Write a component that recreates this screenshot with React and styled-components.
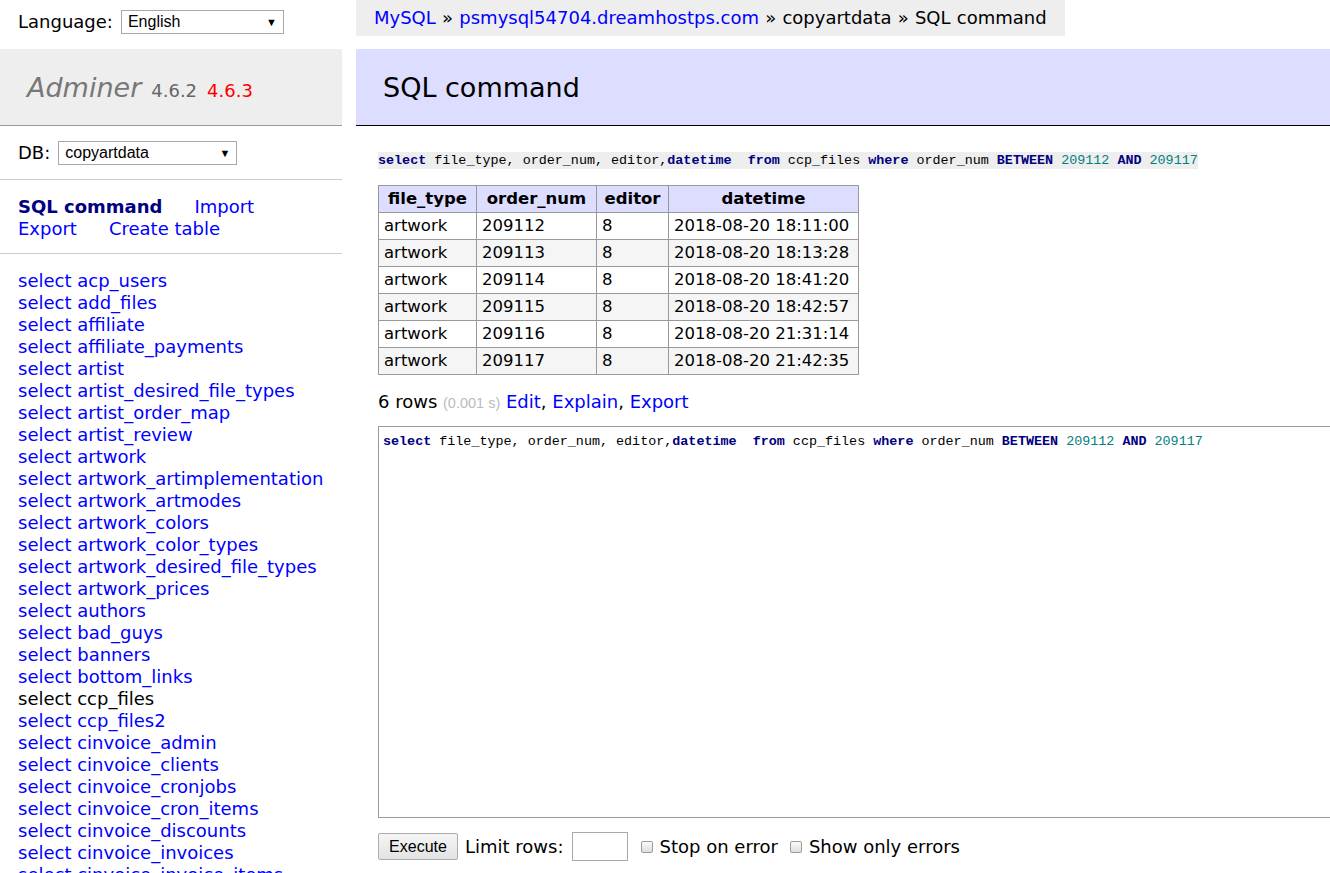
import React from "react";
import styled, { createGlobalStyle } from "styled-components";

const Global = createGlobalStyle`
  html, body { margin: 0; padding: 0; background: #fff; overflow: hidden; }
  body {
    font-family: "DejaVu Sans", Verdana, sans-serif;
    font-size: 18px;
    line-height: 22px;
    color: #000;
  }
  a { color: #00f; text-decoration: none; }
`;

const Page = styled.div`
  display: flex;
  align-items: flex-start;
  width: 1330px;
  height: 873px;
  overflow: hidden;
`;

const Sidebar = styled.aside`
  width: 342px;
  flex: none;
`;

const FieldRow = styled.div`
  box-sizing: border-box;
  height: ${(p) => p.$h}px;
  display: flex;
  align-items: center;
  gap: ${(p) => p.$gap}px;
  padding-left: 18px;
  padding-bottom: ${(p) => p.$pb || 0}px;
`;

const SelectWrap = styled.div`
  position: relative;
  width: ${(p) => p.$w}px;
  height: 24px;
  box-sizing: border-box;
  border: 1px solid #a9a9a9;
  background: #fff;
  font-family: "Liberation Sans", Arial, sans-serif;
  font-size: 16px;
  line-height: 22px;
  padding-left: 6px;
  color: #000;
`;

const Arrow = styled.span`
  position: absolute;
  right: 6px;
  top: 0;
  font-size: 11px;
  line-height: 22px;
  color: #000;
`;

const Brand = styled.h1`
  margin: 0;
  height: 76px;
  line-height: 78px;
  background: #eee;
  border-bottom: 1px solid #999;
  padding-left: 27px;
  font-size: 27px;
  font-weight: normal;
  color: #777;
`;

const BrandName = styled.span`
  font-style: italic;
`;

const Version = styled.span`
  font-size: 18px;
  margin-left: 10px;
  color: ${(p) => p.$c};
`;

const Rule = styled.hr`
  margin: 0;
  border: 0;
  border-top: 1px solid #ccc;
  height: 0;
`;

const MenuLinks = styled.div`
  display: flex;
  flex-wrap: wrap;
  column-gap: 32px;
  padding: 16px 18px 13px;
`;

const MenuLink = styled.a`
  font-weight: ${(p) => (p.$active ? "bold" : "normal")};
  color: ${(p) => (p.$active ? "#000080" : "#00f")};
`;

const TableList = styled.div`
  padding: 16px 18px;
`;

const TableLink = styled.a`
  display: block;
  white-space: nowrap;
  color: ${(p) => (p.$active ? "#000" : "#00f")};
`;

const Content = styled.main`
  flex: 1;
  min-width: 0;
  margin-left: 14px;
`;

const Breadcrumb = styled.nav`
  display: inline-block;
  background: #eee;
  padding: 7px 18px 7px;
  word-spacing: 0.5px;
  white-space: nowrap;
`;

const Sep = styled.span`
  color: #000;
`;

const Title = styled.h2`
  margin: 13px 0 0;
  height: 76px;
  line-height: 78px;
  background: #ddf;
  border-bottom: 1px solid #000;
  padding-left: 27px;
  font-size: 27px;
  font-weight: normal;
`;

const Body = styled.div`
  padding-left: 22px;
`;

const CodeLine = styled.p`
  margin: 21px 0 0;
  line-height: 22px;
`;

const Code = styled.code`
  font-family: "Liberation Mono", "DejaVu Sans Mono", monospace;
  font-size: 13.4px;
  background: ${(p) => (p.$plain ? "transparent" : "#eee")};
  white-space: pre;
  padding: 1px 0;
`;

const Kw = styled.span`
  color: #000080;
  font-weight: bold;
`;

const Num = styled.span`
  color: #008080;
`;

const Grid = styled.table`
  margin-top: 13px;
  border-collapse: collapse;
  table-layout: fixed;
  width: 481px;
  font-size: 16.5px;
`;

const Th = styled.th`
  width: ${(p) => p.$w}px;
  background: #ddf;
  border: 1px solid #999;
  padding: 2px 5px;
  font-weight: bold;
  text-align: center;
  white-space: nowrap;
`;

const Tr = styled.tr`
  background: ${(p) => (p.$odd ? "#f5f5f5" : "#fff")};
`;

const Td = styled.td`
  border: 1px solid #999;
  padding: 2px 5px;
  white-space: nowrap;
`;

const Summary = styled.p`
  margin: 16px 0 0;
`;

const Time = styled.span`
  font-family: "Liberation Sans", Arial, sans-serif;
  font-size: 14.5px;
  color: #bbb;
`;

const Editor = styled.div`
  margin-top: 12px;
  box-sizing: border-box;
  width: 1000px;
  height: 392px;
  border: 1px solid #999;
  border-right: 0;
  padding: 3px 4px;
  line-height: 18px;
`;

const Controls = styled.div`
  margin-top: 14px;
  display: flex;
  align-items: center;
  height: 29px;
`;

const Button = styled.button`
  box-sizing: border-box;
  height: 27px;
  width: 80px;
  border: 1px solid #acacac;
  border-radius: 2px;
  background: linear-gradient(#f5f5f5, #e3e3e3);
  font-family: "Liberation Sans", Arial, sans-serif;
  font-size: 16px;
  color: #000;
  padding: 0;
  margin-right: 7px;
`;

const Input = styled.input`
  box-sizing: border-box;
  width: 56px;
  height: 29px;
  border: 1px solid #a9a9a9;
  margin: 0 13px 0 8px;
`;

const Check = styled.label`
  display: flex;
  align-items: center;
  gap: 7px;
  margin-right: 12px;
`;

const Box = styled.span`
  display: inline-block;
  width: 10px;
  height: 10px;
  border: 1px solid #9a9a9a;
  border-radius: 2px;
  background: linear-gradient(#fbfbfb, #dedede);
`;

const tables = [
  "acp_users", "add_files", "affiliate", "affiliate_payments", "artist",
  "artist_desired_file_types", "artist_order_map", "artist_review", "artwork",
  "artwork_artimplementation", "artwork_artmodes", "artwork_colors",
  "artwork_color_types", "artwork_desired_file_types", "artwork_prices",
  "authors", "bad_guys", "banners", "bottom_links", "ccp_files", "ccp_files2",
  "cinvoice_admin", "cinvoice_clients", "cinvoice_cronjobs",
  "cinvoice_cron_items", "cinvoice_discounts", "cinvoice_invoices",
  "cinvoice_invoice_items",
];

const rows = [
  ["artwork", "209112", "8", "2018-08-20 18:11:00"],
  ["artwork", "209113", "8", "2018-08-20 18:13:28"],
  ["artwork", "209114", "8", "2018-08-20 18:41:20"],
  ["artwork", "209115", "8", "2018-08-20 18:42:57"],
  ["artwork", "209116", "8", "2018-08-20 21:31:14"],
  ["artwork", "209117", "8", "2018-08-20 21:42:35"],
];

function Query({ plain }) {
  return (
    <Code $plain={plain}>
      <Kw>select</Kw> file_type, order_num, editor,<Kw>datetime</Kw>  <Kw>from</Kw> ccp_files <Kw>where</Kw> order_num <Kw>BETWEEN</Kw> <Num>209112</Num> <Kw>AND</Kw> <Num>209117</Num>
    </Code>
  );
}

export default function App() {
  return (
    <>
      <Global />
      <Page>
        <Sidebar>
          <FieldRow $h={49} $gap={8} $pb={5}>
            <span>Language:</span>
            <SelectWrap $w={163}>
              English<Arrow>▼</Arrow>
            </SelectWrap>
          </FieldRow>
          <Brand>
            <BrandName>Adminer</BrandName>
            <Version $c="#666">4.6.2</Version>
            <Version $c="#f00">4.6.3</Version>
          </Brand>
          <FieldRow $h={53} $gap={8}>
            <span>DB:</span>
            <SelectWrap $w={179}>
              copyartdata<Arrow>▼</Arrow>
            </SelectWrap>
          </FieldRow>
          <Rule />
          <MenuLinks>
            <MenuLink $active>SQL command</MenuLink>
            <MenuLink>Import</MenuLink>
            <MenuLink>Export</MenuLink>
            <MenuLink>Create table</MenuLink>
          </MenuLinks>
          <Rule />
          <TableList>
            {tables.map((t) => (
              <TableLink key={t} $active={t === "ccp_files"}>
                select {t}
              </TableLink>
            ))}
          </TableList>
        </Sidebar>
        <Content>
          <Breadcrumb>
            <a>MySQL</a> <Sep>»</Sep> <a>psmysql54704.dreamhostps.com</a> <Sep>»</Sep>{" "}
            copyartdata <Sep>»</Sep> SQL command
          </Breadcrumb>
          <Title>SQL command</Title>
          <Body>
            <CodeLine>
              <Query />
            </CodeLine>
            <Grid>
              <thead>
                <tr>
                  <Th $w={87}>file_type</Th>
                  <Th $w={109}>order_num</Th>
                  <Th $w={61}>editor</Th>
                  <Th $w={179}>datetime</Th>
                </tr>
              </thead>
              <tbody>
                {rows.map((r, i) => (
                  <Tr key={r[1]} $odd={i % 2 === 1}>
                    {r.map((c, j) => (
                      <Td key={j}>{c}</Td>
                    ))}
                  </Tr>
                ))}
              </tbody>
            </Grid>
            <Summary>
              6 rows <Time>(0.001 s)</Time> <a>Edit</a>, <a>Explain</a>, <a>Export</a>
            </Summary>
            <Editor>
              <Query plain />
            </Editor>
            <Controls>
              <Button>Execute</Button>
              <span>Limit rows:</span>
              <Input />
              <Check>
                <Box />
                Stop on error
              </Check>
              <Check>
                <Box />
                Show only errors
              </Check>
            </Controls>
          </Body>
        </Content>
      </Page>
    </>
  );
}
